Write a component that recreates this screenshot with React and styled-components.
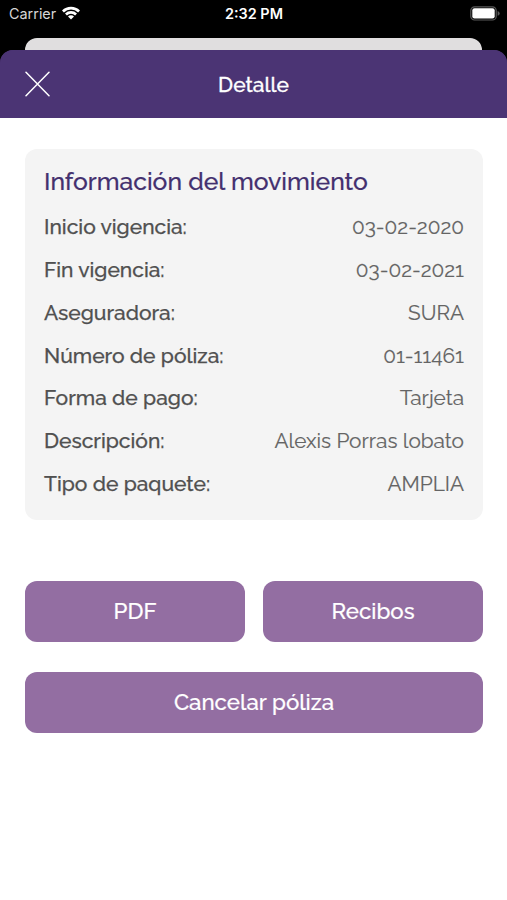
import React from 'react';
import styled, { createGlobalStyle } from 'styled-components';

const details = [
  { label: 'Inicio vigencia:', value: '03-02-2020' },
  { label: 'Fin vigencia:', value: '03-02-2021' },
  { label: 'Aseguradora:', value: 'SURA' },
  { label: 'Número de póliza:', value: '01-11461' },
  { label: 'Forma de pago:', value: 'Tarjeta' },
  { label: 'Descripción:', value: 'Alexis Porras lobato' },
  { label: 'Tipo de paquete:', value: 'AMPLIA' },
];

function App() {
  return (
    <Screen>
      <GlobalStyle />
      <StatusBar>
        <Carrier>
          Carrier
          <WifiIcon viewBox="0 0 18 14">
            <path d="M0 4.5 A12.7 12.7 0 0 1 18 4.5 L16.1 6.4 A10 10 0 0 0 1.9 6.4 Z" />
            <path d="M3 7.5 A8.5 8.5 0 0 1 15 7.5 L13.1 9.4 A5.8 5.8 0 0 0 4.9 9.4 Z" />
            <path d="M6 10.5 A4.2 4.2 0 0 1 12 10.5 L9 13.6 Z" />
          </WifiIcon>
        </Carrier>
        <Clock>2:32 PM</Clock>
        <BatteryIcon viewBox="0 0 30 15">
          <rect x="0.8" y="0.8" width="25.4" height="13.2" rx="3.8" fill="none" stroke="#5a5a5a" strokeWidth="1.2" />
          <rect x="2.3" y="2.3" width="22.4" height="10.2" rx="2.2" fill="#fff" />
          <path d="M27.6 5 Q29.7 5.8 29.7 7.4 Q29.7 9 27.6 9.8 Z" fill="#5a5a5a" />
        </BatteryIcon>
      </StatusBar>
      <BackSheet />
      <Sheet>
        <Header>
          <CloseButton aria-label="Cerrar">
            <svg width="25" height="26" viewBox="0 0 25 26">
              <path d="M1 1.2 L24 24.8 M24 1.2 L1 24.8" stroke="#fff" strokeWidth="1.5" strokeLinecap="round" />
            </svg>
          </CloseButton>
          <Title>Detalle</Title>
        </Header>
        <Body>
          <Card>
            <CardTitle>Información del movimiento</CardTitle>
            {details.map((item) => (
              <Row key={item.label}>
                <Label>{item.label}</Label>
                <Value>{item.value}</Value>
              </Row>
            ))}
          </Card>
          <Actions>
            <Button>PDF</Button>
            <Button>Recibos</Button>
            <Button $wide>Cancelar póliza</Button>
          </Actions>
        </Body>
      </Sheet>
    </Screen>
  )
}

export default App

const GlobalStyle = createGlobalStyle`
  * {
    box-sizing: border-box;
  }
  body {
    margin: 0;
    background: #000;
  }
`;

const Screen = styled.div`
  display: flex;
  flex-direction: column;
  width: 100%;
  height: 900px;
  overflow: hidden;
  background: #000;
  font-family: 'Raleway', 'Lato', sans-serif;
`;

const StatusBar = styled.div`
  display: grid;
  grid-template-columns: 1fr auto 1fr;
  align-items: center;
  height: 38px;
  padding: 0 7px 11px 9px;
  color: #fff;
  font-family: 'Inter', sans-serif;
`;

const Carrier = styled.div`
  display: flex;
  align-items: center;
  gap: 6px;
  font-size: 14.4px;
  color: #d6d6d6;
`;

const WifiIcon = styled.svg`
  width: 18px;
  height: 14px;
  fill: #fff;
  margin-top: -2px;
`;

const Clock = styled.div`
  padding-right: 1px;
  font-size: 14.4px;
  font-weight: 600;
`;

const BatteryIcon = styled.svg`
  width: 30px;
  height: 15px;
  justify-self: end;
  margin-top: -1px;
`;

const BackSheet = styled.div`
  flex: none;
  height: 12px;
  margin: 0 24.6px 0 25.4px;
  border-radius: 12px 12px 0 0;
  background: #e0dedf;
`;

const Sheet = styled.div`
  flex: 1;
  border-radius: 13px 13px 0 0;
  overflow: hidden;
  background: linear-gradient(#4b3474 60px, #fff 60px);
`;

const Header = styled.div`
  display: grid;
  grid-template-columns: 1fr auto 1fr;
  align-items: center;
  height: 68px;
  padding: 0 25px;
  background: #4b3474;
`;

const CloseButton = styled.button`
  display: flex;
  justify-self: start;
  padding: 0;
  border: none;
  background: none;
`;

const Title = styled.h1`
  margin: 0;
  font-size: 21px;
  font-weight: 500;
  color: #fff;
  -webkit-text-stroke: 0.3px #fff;
`;

const Body = styled.div`
  padding: 31px 24px 0 25px;
`;

const Card = styled.div`
  height: 371px;
  padding: 17px 19px 0;
  border-radius: 12px;
  background: #f4f4f4;
`;

const CardTitle = styled.h2`
  margin: 0 0 7.5px;
  font-size: 24.7px;
  line-height: 32px;
  font-weight: 500;
  white-space: nowrap;
  color: #43306f;
  -webkit-text-stroke: 0.2px #43306f;
`;

const Row = styled.div`
  display: flex;
  justify-content: space-between;
  align-items: center;
  height: 42.75px;
  white-space: nowrap;
`;

const Label = styled.span`
  font-size: 21px;
  font-weight: 500;
  color: #505050;
  -webkit-text-stroke: 0.25px #505050;
`;

const Value = styled.span`
  font-size: 20.8px;
  font-weight: 400;
  color: #646464;
  -webkit-text-stroke: 0.15px #646464;
`;

const Actions = styled.div`
  display: grid;
  grid-template-columns: 1fr 1fr;
  gap: 30.4px 18px;
  margin-top: 61px;
`;

const Button = styled.button`
  grid-column: ${({ $wide }) => ($wide ? '1 / -1' : 'auto')};
  height: 61px;
  padding: 0 0 1px;
  border: none;
  border-radius: 12px;
  background: #936ea2;
  color: #fff;
  font-family: inherit;
  font-size: 22.3px;
  font-weight: 500;
  -webkit-text-stroke: 0.2px #fff;
`;
